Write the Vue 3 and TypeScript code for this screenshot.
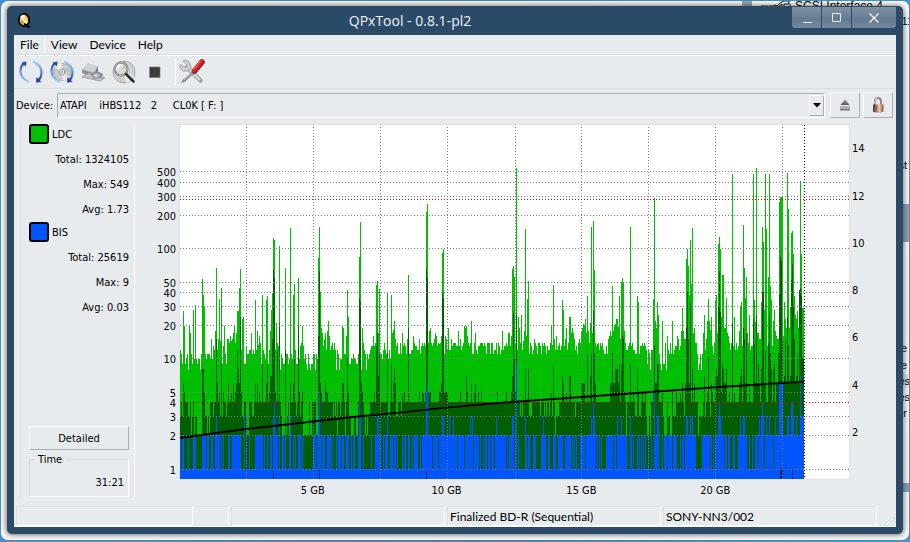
<script setup lang="ts">
import { ref } from 'vue'

type Pair = [number, number]
interface Block { start: number; data: string }

const PLOT_BOTTOM = 354

// Samples are "offset,level" pairs on a grid three times finer than the plot.
function bars(blocks: Block[], bottom = PLOT_BOTTOM): string {
  let d = ''
  for (const b of blocks) {
    for (const item of b.data.trim().split(/\s+/)) {
      const [o, l] = item.split(',').map(Number) as Pair
      const x = b.start + Math.floor(o / 3)
      const y = Math.round(l / 3) - 5
      d += `M${x} ${y}h1V${bottom}h-1z`
    }
  }
  return d
}

function runs(blocks: Block[], top: number, bottom: number): string {
  let d = ''
  for (const b of blocks) {
    for (const item of b.data.trim().split(/\s+/)) {
      const [s, e] = item.split('-').map(Number) as Pair
      const x = b.start + Math.floor(s / 3)
      const w = Math.max(1, Math.round((e - s) / 3))
      d += `M${x} ${top}h${w}V${bottom}h-${w}z`
    }
  }
  return d
}

function noise(): string {
  let seed = 17
  let d = 'M0 354'
  for (let i = 0; i < 625; i++) {
    seed = (seed * 1103515245 + 12345) % 2147483648
    const r = seed / 2147483648
    const low = i < 211 || (i > 467 && i < 505) || (i > 516 && i < 525) ? 8 : 10.6
    const v = Math.round(low + r * 3.4)
    const y = Math.round(344.3 - 110.4 * Math.log10(v))
    d += `V${y}h1`
  }
  return d + 'V354z'
}

const ldc = noise() + bars([
  { start: -9, data: `28,689 31,702 37,573 40,617 55,617 58,639 67,571 73,555 91,702 94,477 97,525 100,560 121,657 127,678 130,689 133,633 136,444 139,689 142,657 145,537 148,662 151,504 157,678 160,617 169,657 172,657 175,668 178,648 181,662 184,657 187,640 190,617 193,668 196,640 199,573 202,573 205,504 208,447 211,690 214,598 217,591 226,678 235,690 238,690 241,640 247,690 253,540 256,690 259,633 262,676 265,648 268,668 274,525 277,690 280,702 286,540 289,528 295,690 298,633 301,570 304,518 307,354 310,360 313,690 316,609 319,668 322,678 325,378 343,444 349,702 358,324 367,525 370,492 373,690 382,474 388,678 391,668 394,617 397,678 442,414 445,321 448,516 451,625 454,640 457,678 460,657 463,640 466,690 469,633 472,603 475,648 478,690 481,678 484,668 487,690 490,668 493,690 499,690 514,617 517,625 526,648 529,510 532,591 565,411 568,306 574,625 577,668 580,690 595,702 598,690 601,678 604,678 607,648 610,678 613,668 616,495 619,483 622,640 625,507 637,690 640,670 643,690 649,518 655,690 661,525 664,640 667,630 670,603 673,660 676,690` },
  { start: 211, data: `1,525 4,668 7,633 10,603 13,657 34,640 37,678 40,668 49,657 52,465 67,648 70,668 76,690 85,657 94,668 100,668 106,276 109,252 112,668 115,633 118,625 121,668 127,668 130,657 133,640 136,648 139,678 142,668 145,672 148,668 151,648 154,399 157,387 163,648 166,657 172,625 181,657 187,668 190,668 199,678 202,633 208,657 217,668 220,617 223,625 226,617 229,648 232,668 241,603 250,668 253,640 262,678 265,678 268,668 271,668 274,668 277,678 280,678 283,678 289,668 295,668 304,668 316,668 325,678 334,633 346,668 352,640 355,640 361,648 364,447 367,438 370,470 373,668 376,537 379,144 382,690 385,591 388,625 394,585 400,662 403,633 406,327 409,648 412,537 415,483 433,657 436,668 445,668 448,678 457,678 463,668 466,678 481,668 484,617 487,674 490,495 493,657 499,648 514,678 517,540 520,570 523,678 526,657 529,625 532,690 535,668 538,591 541,591 544,640 547,625 550,640 553,657 559,678 568,657 571,668 574,633 577,625 580,611 583,615 586,598 589,640 592,528 595,633 601,609 604,321 607,640 610,303 613,450 616,668 619,678 622,672 625,668 628,690 632,668 635,678 650,678 655,657 658,648 661,633 664,648 667,498 670,633 673,615 676,611 679,598 682,598 685,620 688,528` },
  { start: 431, data: `1,633 4,648 7,498 10,633 13,625 16,615 19,598 22,598 25,620 28,528 31,657 34,486 37,474 40,486 43,633 46,690 52,690 55,678 58,668 61,321 64,678 67,668 70,690 82,528 85,546 94,678 97,678 100,678 103,668 106,678 109,690 115,690 118,700 124,690 127,690 130,537 133,234 136,603 139,625 142,546 145,585 157,603 166,668 172,648 175,690 181,668 187,603 193,690 196,678 199,678 202,648 205,657 208,690 211,678 214,633 217,564 220,633 223,657 226,657 229,417 232,387 235,438 238,525 241,360 244,492 247,324 250,640 253,625 256,668 259,668 280,640 283,585 286,690 289,657 292,603 295,537 298,603 301,630 304,591 307,678 313,690 316,540 319,525 322,640 325,372 328,351 331,387 334,591 337,465 340,465 343,625 346,625 349,534 352,640 355,648 358,668 364,668 367,162 373,591 379,678 385,690 388,633 391,560 394,546 397,690 400,315 403,444 406,534 409,471 412,640 415,668 418,585 421,690 424,678 427,690 430,162 433,540 436,605 439,144 442,640 445,640 448,657 451,657 454,546 457,321 460,366 463,570 466,162 469,327 472,678 475,471 478,162 481,498 484,540 487,678 490,603 493,570 496,633 499,648 502,657 505,657 508,246 511,231 514,231 517,231 520,648 523,546 526,598 529,625 532,159 535,267 538,625 541,560 544,339 547,333 550,402 553,528 556,585 559,598 562,573 565,625 568,510 571,183 574,402 577,564 580,564` },
])

const average = bars([
  { start: -9, data: `37,790 40,817 94,747 97,747 100,817 136,657 139,790 145,817 151,730 157,817 172,790 181,817 187,790 193,817 196,790 199,690 202,747 205,790 208,591 211,817 253,790 259,790 265,817 274,732 286,790 289,732 295,817 298,768 301,768 304,657 307,450 310,474 313,817 319,690 325,609 343,690 358,790 367,790 370,715 382,617 385,817 394,817 442,648 445,453 448,790 451,817 463,790 466,817 469,817 514,790 517,790 529,710 532,817 565,534 568,546 571,790 574,817 610,817 616,678 619,640 622,768 625,700 649,700 661,768 667,790 670,768` },
  { start: 211, data: `1,732 7,817 10,747 13,790 34,817 40,817 52,625 85,817 94,817 97,817 103,817 106,447 109,474 112,817 115,817 118,817 145,817 148,817 151,790 154,519 157,534 160,817 163,817 166,817 169,817 208,817 226,768 229,817 241,790 250,817 253,790 262,817 271,817 319,817 346,817 361,817 364,768 367,579 370,715 373,817 376,790 379,585 406,747 415,747 484,817 490,733 517,768 520,790 529,817 538,768 541,768 574,790 577,790 580,790 583,790 592,700 601,768 604,700 610,573 613,700 616,790 661,790 667,700 670,790 673,790 676,747 679,747 682,747 688,732` },
  { start: 431, data: `1,790 4,790 7,700 10,790 13,790 16,747 19,747 22,747 25,790 28,732 34,732 37,648 40,657 43,817 61,732 70,817 82,747 85,817 97,817 106,817 130,817 133,678 136,790 139,790 142,732 145,732 157,817 187,817 199,817 211,817 217,790 226,790 229,625 232,516 235,657 238,790 241,546 247,747 253,790 283,768 292,817 295,710 304,790 307,817 316,768 319,747 322,768 325,558 328,453 331,576 334,817 337,732 340,747 343,790 346,790 349,747 358,817 367,609 373,817 388,790 391,768 394,747 400,625 403,657 406,790 409,640 418,790 430,598 433,672 436,790 439,585 442,790 445,732 448,790 454,747 457,516 460,516 463,790 466,690 475,670 478,580 481,700 484,747 490,747 493,732 499,790 502,790 505,700 508,522 511,411 514,423 517,657 520,790 523,768 526,657 529,790 532,591 535,678 538,790 541,768 544,480 547,432 550,560 553,657 556,790 559,768 562,700 565,790 568,510 571,505 574,528 577,715 580,715` },
])

const gapsToThree = runs([
  { start: -1, data: `3-6 9-12 28-34 36-42 45-75 78-93 102-105 123-126 129-132 141-144 189-195 201-207 219-225 306-318 321-327 330-333 342-348 351-354 360-366 462-465 468-471 483-486 489-492 510-534 543-552 555-573 627-633 645-648 651-657 666-669` },
  { start: 311, data: `90-93 96-99 117-126 150-153 162-165 168-171 177-180 186-189 195-207 255-258 408-411 435-441 447-453 468-483 519-531 534-546 549-558 582-585 624-639 645-648 660-663` },
], 277, 291)

const gapsToTwo = runs([
  { start: -1, data: `36-39 45-48 54-69 84-87 90-93 204-210 309-318 321-324 330-333 342-345 372-390 393-399 411-417 474-477 498-501 516-525 531-537 546-549 558-561 564-567` },
  { start: 311, data: `195-198 408-411 471-477 480-483 522-531 540-546 624-627` },
], 277, 310)

const bisPairs = runs([
  { start: -1, data: `3-6 9-15 27-30 42-51 69-81 84-90 96-102 108-111 114-123 126-129 132-135 147-153 159-186 195-198 210-213 228-252 255-258 264-267 273-279 282-285 288-297 300-303 309-315 318-321 330-336 342-345 348-351 357-366 369-372 402-411 414-426 429-438 444-456 459-462 471-474 477-486 489-495 501-510 516-519 522-528 537-546 552-555 576-579 588-606 612-615 618-627 633-642 645-651 654-657 669-672 675-681 687-693 699-702 705-717 723-726 729-759 762-777 780-789 795-834 837-855 858-873 876-882 885-900 903-906 912-915 918-924 927-933 936-945 948-951 954-960` },
  { start: 311, data: `24-45 48-51 54-69 72-75 78-81 84-87 105-111 114-120 129-138 153-159 162-168 174-180 189-198 204-219 225-243 246-249 252-255 258-261 270-285 288-318 321-324 327-330 333-336 348-369 372-378 381-411 423-426 429-432 441-444 447-450 453-456 459-462 465-468 474-477 483-486 492-507 516-519 522-531 534-546 549-561 570-573 576-582 585-618 636-660 663-666 669-672 675-702 705-711 714-720 729-735 744-771 777-780 786-789 795-804 807-822 825-849 852-942` },
], 310, PLOT_BOTTOM)

const bisPeaks = bars([
  { start: -9, data: `136,889 220,889 307,889 310,846 325,889 358,889 442,889 445,817 565,846 568,889 619,889 622,889 649,889` },
  { start: 211, data: `106,817 109,790 154,889 157,889 175,889 187,889 238,889 244,889 316,889 364,889 367,889 379,732 406,889 460,889 604,889 610,850 613,889 682,889` },
  { start: 431, data: `22,889 34,889 61,889 133,820 142,889 145,889 229,889 232,889 241,889 247,889 325,889 328,850 331,889 391,889 400,889 403,889 448,889 454,889 457,846 460,889 469,889 478,889 496,889 508,793 511,793 514,793 517,793 532,889 535,889 544,846 547,846 550,889 559,889 571,768 574,889 577,889 580,889` },
])

const leftAxis: Pair[] = [[500, 46], [400, 57], [300, 71], [200, 90], [100, 123], [50, 157], [40, 167], [30, 181], [20, 200], [10, 233], [5, 267], [4, 277], [3, 291], [2, 310], [1, 344]]
const gridRows = leftAxis.filter(([v]) => v !== 4)
const rightAxis: Pair[] = [[14, 23], [12, 71], [10, 118], [8, 165], [6, 212], [4, 260], [2, 307]]
const verticals = [66, 133, 200, 267, 335, 402, 469, 536, 603]
const bottomAxis: Pair[] = [[5, 133], [10, 267], [15, 402], [20, 536]]
const device = ref('f')

const stats = [
  { name: 'LDC', tone: 'green', rows: ['Total: 1324105', 'Max: 549', 'Avg: 1.73'] },
  { name: 'BIS', tone: 'blue', rows: ['Total: 25619', 'Max: 9', 'Avg: 0.03'] },
]
const menus = ['File', 'View', 'Device', 'Help']
</script>

<template>
  <div class="desktop">
    <div class="backdrop" aria-hidden="true">
      <div class="tree">
        <svg width="34" height="8" viewBox="0 0 34 8"><path d="M2 4h9l-4 4z" fill="#8794a2" /><path d="M11 5h4l2-1 2 1 3-3 4-2h5v3h-5v5M21 5l3-2v5h8V3M19 8l2-2" fill="none" stroke="#111" /></svg>
        <span>SCSI Interface 4</span>
      </div>
      <span class="scrap s1">11</span>
      <span class="scrap s2">st</span>
      <div class="band b1"></div>
      <span class="scrap s3">e</span>
      <span class="scrap s4">e</span>
      <span class="scrap s5">es</span>
      <span class="scrap s6">es</span>
      <span class="scrap s7">er</span>
      <div class="band b2"></div>
    </div>

    <main class="window">
      <header class="titlebar">
        <svg class="logo" width="16" height="16" viewBox="0 0 16 16">
          <ellipse cx="7" cy="7" rx="5.2" ry="5.9" fill="#f6c567" stroke="#090909" stroke-width="2" />
          <path d="M7 7L3 4q2-3 5-2z" fill="#fff8d6" /><path d="M7 7l4 1q-1 4-4 4z" fill="#fff0a8" /><path d="M7 7L3 9q1 3 3 3z" fill="#e68e23" />
          <circle cx="7" cy="7" r="1.3" fill="#fff" /><path d="M7 11q2 0 3 2t3 0" fill="none" stroke="#090909" stroke-width="2" />
        </svg>
        <h1>QPxTool - 0.8.1-pl2</h1>
        <div class="caption">
          <button type="button" aria-label="Minimize"><svg width="12" height="12" viewBox="0 0 12 12"><path d="M2 10.5h9" stroke="#e8edf2" /></svg></button>
          <button type="button" aria-label="Maximize"><svg width="12" height="12" viewBox="0 0 12 12"><path d="M1.5 1.5h8v8h-8z" fill="none" stroke="#e8edf2" /></svg></button>
          <button type="button" aria-label="Close" class="close"><svg width="12" height="12" viewBox="0 0 12 12"><path d="M1.5 1.5l9 9M10.5 1.5l-9 9" stroke="#f4f7fa" stroke-width="1.3" /></svg></button>
        </div>
      </header>

      <nav class="menubar">
        <button v-for="m in menus" :key="m" type="button">{{ m }}</button>
      </nav>

      <div class="toolbar">
        <button type="button" aria-label="Rescan bus">
          <svg width="24" height="24" viewBox="0 0 24 24">
            <defs>
              <linearGradient id="arcL" x1="0" y1="0" x2="0" y2="1"><stop offset="0" stop-color="#2b4da4" /><stop offset=".5" stop-color="#6f9ede" /><stop offset="1" stop-color="#a5cdf3" /></linearGradient>
              <linearGradient id="arcR" x1="0" y1="0" x2="0" y2="1"><stop offset="0" stop-color="#a5cdf3" /><stop offset=".5" stop-color="#6495d8" /><stop offset="1" stop-color="#243f98" /></linearGradient>
            </defs>
            <path d="M10 22Q1.500 18 1.500 11.500 1.500 6 5 3.500" fill="none" stroke="url(#arcL)" stroke-width="2.200" /><path d="M2.500 2.500l5-1-.5 5z" fill="#294a9f" />
            <path d="M14 1.500q8.500 4 8.500 10.500 0 6-3.500 8.500" fill="none" stroke="url(#arcR)" stroke-width="2.200" /><path d="M22.500 22l-5.500.5.500-5.500z" fill="#243f98" />
          </svg>
        </button>
        <button type="button" aria-label="Refresh media">
          <svg width="24" height="24" viewBox="0 0 24 24">
            <circle cx="12" cy="12" r="8.500" fill="#c9cccd" stroke="#aaa" /><path d="M12 12L4.500 7q3-4 7-4z" fill="#eef0e7" /><path d="M12 12l7.500 5q-3 4-7 3.500z" fill="#eee3e6" /><path d="M12 12l7-6q2 3 1.500 6z" fill="#b4c8c7" /><circle cx="12" cy="12" r="2.800" fill="#efefef" stroke="#929496" /><circle cx="12" cy="12" r="1" fill="#888" />
            <path d="M10 22Q1.500 18 1.500 11.500 1.500 6 5 3.500" fill="none" stroke="url(#arcL)" stroke-width="2.200" /><path d="M2.500 2.500l5-1-.5 5z" fill="#294a9f" />
            <path d="M14 1.500q8.500 4 8.500 10.500 0 6-3.500 8.500" fill="none" stroke="url(#arcR)" stroke-width="2.200" /><path d="M22.500 22l-5.500.5.500-5.500z" fill="#243f98" />
          </svg>
        </button>
        <button type="button" aria-label="Load or eject">
          <svg width="24" height="24" viewBox="0 0 24 24">
            <path d="M1 10L7 3.500l10 3-2 9z" fill="#aab0ba" /><path d="M1 9.500L7 3.500l10 3-4 6z" fill="#ccd1d8" /><path d="M1 9.500l12 4v5L1 13z" fill="#8b8f96" /><path d="M13 13.500l4-7v5L13 18.500z" fill="#6e737b" />
            <path d="M1 17l8-4.500 15 5.500-5 3z" fill="#c3c5c8" stroke="#909296" stroke-width=".8" /><path d="M9 14l7-3 6 3-1 4-8 1z" fill="#858b93" /><ellipse cx="15" cy="15.500" rx="4" ry="2.500" fill="#a8afb5" /><ellipse cx="15" cy="15.500" rx="1.500" ry=".9" fill="#eff2f4" /><path d="M10.500 16l2.500.5M18.500 17.500h2.500" stroke="#b98d98" />
          </svg>
        </button>
        <button type="button" aria-label="Scan disc">
          <svg width="24" height="24" viewBox="0 0 24 24">
            <circle cx="12" cy="12" r="11" fill="#cfcfce" stroke="#a5a5a5" /><path d="M12 12L2 8q3-6 9-7z" fill="#f2f1ea" /><path d="M12 12l10 3q-2 6-8 8z" fill="#eceae9" />
            <circle cx="9" cy="9" r="6.500" fill="#d8dbda" fill-opacity=".8" stroke="#767878" stroke-width="2" /><circle cx="9" cy="9" r="6.500" fill="none" stroke="#c5c8c9" stroke-width=".7" /><path d="M5 10q0-5 5-5" stroke="#fff" stroke-width="1.500" fill="none" /><path d="M10 9l3-2" stroke="#90ae9d" /><path d="M14 14l7.500 7.500" stroke="#2a2c2c" stroke-width="2.600" stroke-linecap="round" />
          </svg>
        </button>
        <button type="button" aria-label="Stop"><svg width="24" height="24" viewBox="0 0 24 24"><path d="M6.500 7h10.500v10.500H6.500z" fill="#3b3d3b" stroke="#777a79" stroke-width=".7" /></svg></button>
        <span class="separator"></span>
        <button type="button" aria-label="Preferences">
          <svg width="26" height="26" viewBox="0 0 26 26">
            <path d="M8 8l13.500 13.500" stroke="#8f9192" stroke-width="4.400" stroke-linecap="round" /><path d="M8 8l13.500 13.500" stroke="#d7d9d9" stroke-width="2.600" stroke-linecap="round" />
            <path d="M4 2l4 3.500v2.500l-3 .5-4-3q-.5 5 3.500 6.500 3 .8 5-.5l2.500-3Q11.500 3 8.500 1.500 6 .8 4 2z" fill="#cfd1d1" stroke="#929494" stroke-width=".8" /><circle cx="21.500" cy="21.500" r="1" fill="#818485" />
            <path d="M14.500 13L4 22.500" stroke="#777a7b" stroke-width="2.500" /><path d="M14 13L4 22" stroke="#dfe1e1" stroke-width="1" /><path d="M1.500 24l3-4 2.500 2.500z" fill="#8d9091" />
            <path d="M15.500 12l7.500-9" stroke="#8f1015" stroke-width="5.500" stroke-linecap="round" /><path d="M15 11.500l7.500-9" stroke="#dd2530" stroke-width="3.800" stroke-linecap="round" /><path d="M14.500 10.500l7-8.500" stroke="#f57a80" stroke-width="1" />
          </svg>
        </button>
      </div>

      <div class="device-row">
        <label for="device">Device:</label>
        <div class="select-box">
          <select id="device" v-model="device">
            <option value="f">ATAPI&nbsp;&nbsp;&nbsp;&nbsp;iHBS112&nbsp;&nbsp;&nbsp;2&nbsp;&nbsp;&nbsp;&nbsp;&nbsp;CL0K [ F: ]</option>
          </select>
          <span class="drop"><svg width="8" height="5" viewBox="0 0 8 5"><path d="M0 0h8L4 4.500z" /></svg></span>
        </div>
        <button type="button" class="raised" aria-label="Eject">
          <svg width="12" height="14" viewBox="0 0 12 14"><defs><linearGradient id="ej" x1="0" y1="0" x2="0" y2="1"><stop offset="0" stop-color="#b4b4b4" /><stop offset="1" stop-color="#555" /></linearGradient></defs><path d="M6 1l4.500 6h-9z" fill="url(#ej)" /><path d="M1 8.500h10v1H1zM1 10.500h10V12.500H1z" fill="#777" /></svg>
        </button>
        <button type="button" class="raised" aria-label="Lock">
          <svg width="14" height="18" viewBox="0 0 14 18"><defs><linearGradient id="lk"><stop offset="0" stop-color="#5c392c" /><stop offset=".3" stop-color="#94664e" /><stop offset=".6" stop-color="#f1ceb4" /><stop offset="1" stop-color="#8a4e36" /></linearGradient></defs><path d="M4 9V5.500Q4 2 7 2T10 5.500V9" fill="none" stroke="#888480" stroke-width="1.900" /><path d="M4 8V5.500Q4 2 7 2" fill="none" stroke="#d9d5d0" stroke-width=".9" /><path d="M2 8.500h10.500v7L9 17l-7-1z" fill="url(#lk)" /></svg>
        </button>
      </div>

      <div class="content">
        <aside class="side">
          <div class="panel">
            <section v-for="s in stats" :key="s.name" class="stat">
              <h2><span class="swatch" :class="s.tone"></span>{{ s.name }}</h2>
              <p v-for="r in s.rows" :key="r">{{ r }}</p>
            </section>
            <button type="button" class="raised detailed">Detailed</button>
            <fieldset class="time">
              <legend>Time</legend>
              <output>31:21</output>
            </fieldset>
          </div>
        </aside>

        <svg class="chart" viewBox="0 0 762 380" role="img" aria-label="LDC and BIS error rate by disc position">
          <g transform="translate(45 1)">
            <path d="M-.5 354V-.5H670.500V354.500H0" fill="none" stroke="#dce1e4" />
            <rect width="670" height="354" fill="#fff" />
            <g shape-rendering="crispEdges">
              <path :d="ldc" fill="#00bf00" />
              <rect y="277" width="625" height="77" fill="#005f00" />
              <path :d="gapsToThree" fill="#00bf00" />
              <path :d="gapsToTwo" fill="#00bf00" />
              <path :d="average" fill="#005f00" />
              <rect y="344" width="625" height="10" fill="#0055ff" />
              <path :d="bisPairs" fill="#0055ff" />
              <path :d="bisPeaks" fill="#0055ff" />
              <path d="M93 344h1v10h-1zM139 344h1v10h-1zM246 344h1v10h-1zM601 344h3v10h-3zM613 344h1v10h-1z" fill="#002b80" />
              <g class="grid">
                <path v-for="[v, y] in gridRows" :key="v" :d="`M0 ${y}.5H670`" />
                <path v-for="x in verticals" :key="x" :d="`M${x}.5 354V0`" />
              </g>
              <path class="limit" d="M0 74.500H670M0 277.500H670" />
              <path class="end" d="M625.500 0V354" />
            </g>
            <path d="M0 313.500L44 307.500 66 304.500 133 297 178 292 220 288 262 283.500 336 277 441 269.500 536 262.500 625 257" fill="none" stroke="#000" stroke-width="2" />
            <g class="axis">
              <text v-for="[v, y] in leftAxis" :key="v" x="-4" :y="y + 5" text-anchor="end">{{ v }}</text>
              <text v-for="[v, y] in rightAxis" :key="v" x="673" :y="y + 4">{{ v }}</text>
              <text v-for="[v, x] in bottomAxis" :key="v" :x="x" y="370" text-anchor="middle">{{ v }} GB</text>
            </g>
          </g>
        </svg>
      </div>

      <footer class="status">
        <span></span><span></span><span></span>
        <span>Finalized BD-R (Sequential)</span>
        <span>SONY-NN3/002</span>
        <svg width="17" height="20" viewBox="0 0 17 20"><path d="M3 20L17 6M7 20L17 10M11 20l6-6M15 20l2-2" stroke="#fff" /><path d="M4 20L17 7M8 20l9-9M12 20l5-5" stroke="#bfc7ca" stroke-width=".6" /></svg>
      </footer>
    </main>
  </div>
</template>

<style>
body { margin: 0; background: #3f97cc; }
</style>

<style scoped>
* { box-sizing: border-box; }
.desktop {
  position: relative;
  min-height: 100vh;
  padding: 6px 7px 8px;
  overflow: hidden;
  background: linear-gradient(90deg, #4a90c4, #4b83ad 50%, #3f97cc);
  font-family: "DejaVu Sans Condensed", "DejaVu Sans", sans-serif;
  font-size: 11px;
  color: #000;
}
.backdrop {
  position: absolute;
  inset: 1px 1px 2px 1px;
  overflow: hidden;
  border-radius: 7px;
  background: #f7f7f7;
}
.tree { position: absolute; left: 741px; right: 0; top: -1px; height: 12px; display: flex; gap: 3px; border-left: 10px solid #93a5b7; background: #fff; font: 12px/12px "Liberation Sans", sans-serif; white-space: nowrap; }
.tree svg { margin-left: 6px; margin-top: 1px; }
.scrap { position: absolute; right: 2px; font: 11px/14px "Liberation Sans", sans-serif; }
.s1 { top: 13px; right: -4px; }
.s2 { top: 157px; }
.s3 { top: 340px; }
.s4 { top: 357px; }
.s5 { top: 373px; right: -1px; background: #dfe2e5; }
.s6 { top: 389px; right: -1px; }
.s7 { top: 405px; }
.band { position: absolute; right: 0; width: 20px; background: #8c9cae; }
.b1 { top: 203px; height: 38px; border-top: 1px solid #8b9aaa; }
.b2 { top: 482px; height: 9px; }

.window {
  position: relative;
  display: flex;
  flex-direction: column;
  padding: 0 7px 7px;
  border-radius: 5px;
  background: #2b4a68;
  box-shadow: 0 0 5px 1px rgba(40, 40, 40, .6);
}
button { font: inherit; color: inherit; margin: 0; padding: 0; border: 0; background: none; }
.titlebar { display: flex; justify-content: center; position: relative; height: 29px; }
.logo { position: absolute; left: 3px; top: 7px; }
h1 { margin: 0; padding-right: 90px; font: 14px/30px "Open Sans", "Noto Sans", sans-serif; color: #f0f4f8; }
.caption { position: absolute; right: 0; top: 1px; display: flex; gap: 1px; background: #2b4a68; }
.caption button { display: grid; place-items: center; width: 29px; height: 21px; background: linear-gradient(#8191a3, #6a7f95 50%, #62788f 51%, #7389a0); }
.caption button:first-child { border-radius: 0 0 0 3px; }
.caption .close { width: 44px; border-radius: 0 0 3px 0; }

.menubar, .toolbar, .device-row, .content, .status { background: #e7ebee; }
.menubar { display: flex; height: 20px; font: 12px/20px Lato, "Open Sans", sans-serif; border-bottom: 1px solid #d8dde0; }
.menubar button { padding: 0 6px; }
.menubar button:first-child { border-right: 1px solid #f4f6f7; border-left: 1px solid #f4f6f7; padding: 0 5px; }
.toolbar { display: flex; height: 34px; padding-left: 1px; border-top: 1px solid #fff; border-bottom: 1px solid #d9dde0; }
.toolbar button { display: grid; place-items: center; width: 31px; }
.separator { width: 1px; margin: 3px 0 3px 5px; background: #fff; }

.device-row { display: flex; align-items: center; gap: 3px; height: 35px; padding: 0 3px 3px 2px; }
.device-row label { width: 38px; white-space: nowrap; }
.select-box { position: relative; flex: 1; display: flex; margin-right: 2px; }
select { appearance: none; width: 100%; height: 25px; padding: 0 24px 0 2px; border: 1px solid; border-color: #a6b0b4 #fff #fff #a6b0b4; border-radius: 0; background: #e7ebee; font: inherit; color: #000; }
.drop { position: absolute; right: 1px; top: 2px; width: 15px; height: 21px; display: grid; place-items: center; pointer-events: none; }
.drop, .raised { border: 1px solid; border-color: #fff #a6b0b4 #a6b0b4 #fff; background: #e7ebee; }
.device-row .raised { display: grid; place-items: center; width: 30px; height: 26px; }

.content { display: flex; align-items: flex-start; }
.side { flex: 0 0 120px; padding-left: 6px; }
.panel { height: 373px; display: flex; flex-direction: column; padding: 0 5px 0 8px; border-left: 1px solid #dadfe1; border-right: 1px solid #fff; }
h2, p { margin: 0; font-size: 11px; font-weight: normal; }
.stat { padding-bottom: 3px; }
h2 { display: flex; align-items: center; gap: 3px; height: 20px; }
.stat p { height: 25px; line-height: 31px; text-align: right; white-space: nowrap; }
.swatch { width: 20px; height: 20px; border: 2px solid #000; border-radius: 3px; }
.green { background: #00bf00; }
.blue { background: #0055ff; }
.detailed { margin-top: auto; height: 24px; width: 100px; }
.time { margin: 3px 0 0; padding: 0 4px 0 0; height: 44px; width: 100px; border: 1px solid #d8dde0; border-right-color: #fff; border-bottom-color: #fff; text-align: right; }
.time legend { margin-left: 5px; padding: 0 3px; line-height: 13px; text-align: left; }
.time output { display: block; line-height: 34px; }

.chart { flex: 1; min-width: 0; display: block; }
.grid path { fill: none; stroke: #808080; stroke-width: 1; stroke-dasharray: 1 2; }
.limit { fill: none; stroke: #ff0000; stroke-dasharray: 1 2; }
.end { fill: none; stroke: #000; stroke-dasharray: 1 2; }
.axis text { font-size: 11px; }

.status { display: grid; grid-template-columns: 177fr 34fr 214fr 214fr 214fr 17fr; gap: 2px; height: 23px; padding: 2px 0 0 2px; border-bottom: 1px solid #fff; font: 12px/20px Lato, "Open Sans", sans-serif; }
.status span { padding-left: 2px; border: 1px solid; border-color: #dbe0e2 #fff #fff #dbe0e2; white-space: nowrap; overflow: hidden; }
.status span:nth-child(2) { border-left-color: transparent; border-bottom-color: transparent; }
</style>
